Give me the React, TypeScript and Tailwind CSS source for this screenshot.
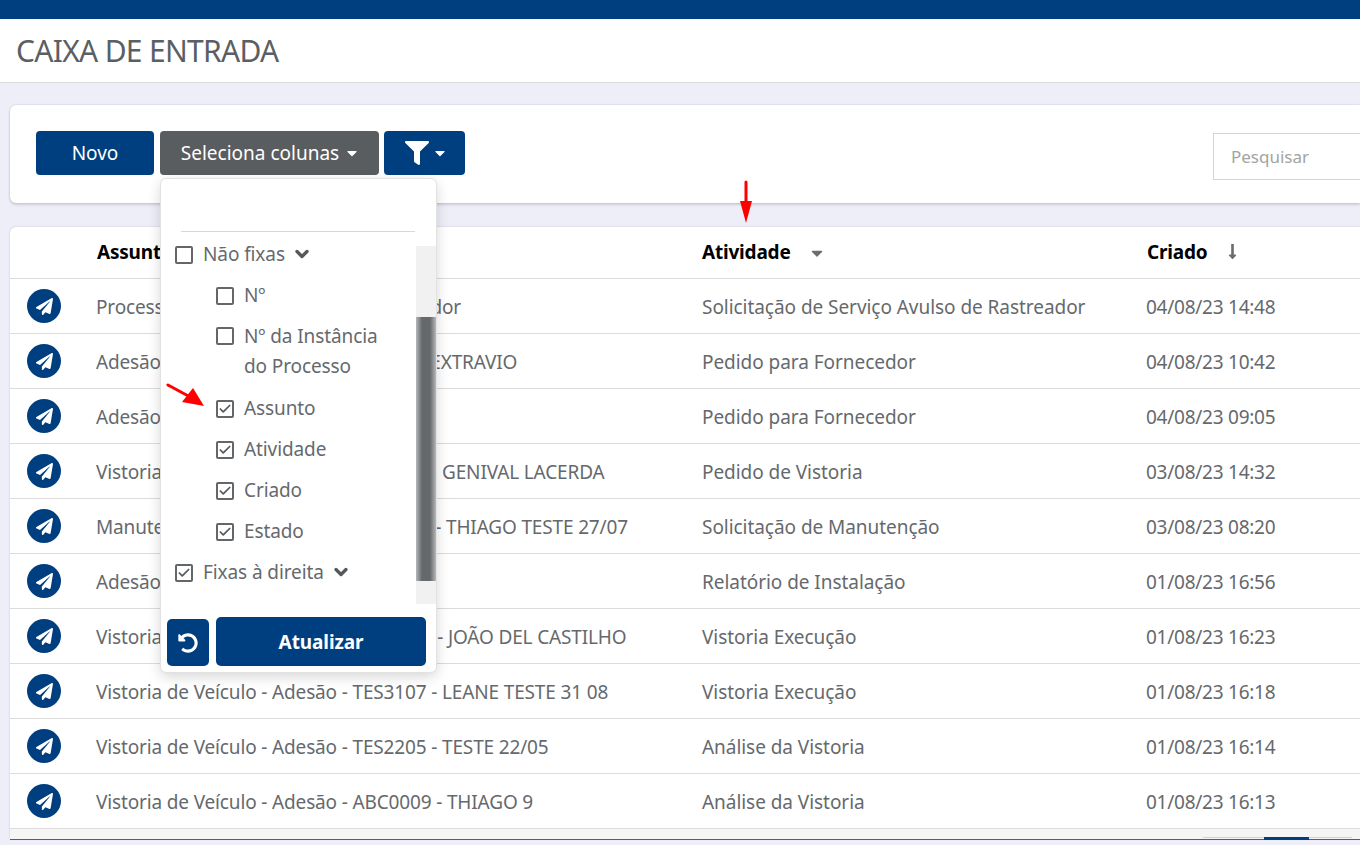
import { Check, ChevronDown } from "lucide-react";
import { FaCaretDown, FaFilter, FaLongArrowAltDown, FaPaperPlane, FaUndoAlt } from "react-icons/fa";

const rows = [
  ["Processo de Serviço Avulso de Rastreador", "Solicitação de Serviço Avulso de Rastreador", "04/08/23 14:48"],
  ["Adesão de Veículo - Adesão - TES408 - EXTRAVIO", "Pedido para Fornecedor", "04/08/23 10:42"],
  ["Adesão de Veículo", "Pedido para Fornecedor", "04/08/23 09:05"],
  ["Vistoria de Veículo - Adesão - TES0308 - GENIVAL LACERDA", "Pedido de Vistoria", "03/08/23 14:32"],
  ["Manutenção de Rastreador - TES-2707 - THIAGO TESTE 27/07", "Solicitação de Manutenção", "03/08/23 08:20"],
  ["Adesão de Veículo", "Relatório de Instalação", "01/08/23 16:56"],
  ["Vistoria de Veículo - Adesão - TES-0108 - JOÃO DEL CASTILHO", "Vistoria Execução", "01/08/23 16:23"],
  ["Vistoria de Veículo - Adesão - TES3107 - LEANE TESTE 31 08", "Vistoria Execução", "01/08/23 16:18"],
  ["Vistoria de Veículo - Adesão - TES2205 - TESTE 22/05", "Análise da Vistoria", "01/08/23 16:14"],
  ["Vistoria de Veículo - Adesão - ABC0009 - THIAGO 9", "Análise da Vistoria", "01/08/23 16:13"],
];

function Box({ checked }: { checked?: boolean }) {
  return (
    <span className="flex h-[18px] w-[18px] shrink-0 items-center justify-center rounded-[2px] border-2 border-[#63676a] bg-white">
      {checked && <Check className="h-[14px] w-[14px] text-[#55595c]" strokeWidth={3} />}
    </span>
  );
}

function ColumnOption({ label, checked }: { label: string; checked?: boolean }) {
  return (
    <div className="flex h-[41px] items-center gap-[10px] pl-[55px]">
      <Box checked={checked} />
      <span>{label}</span>
    </div>
  );
}

function ColumnGroup({ label, checked }: { label: string; checked?: boolean }) {
  return (
    <div className="flex h-[41px] items-center gap-[10px] pl-[14px]">
      <Box checked={checked} />
      <span>{label}</span>
      <ChevronDown className="-ml-[3px] -mt-[2px] h-[20px] w-[20px] text-[#55595c]" strokeWidth={4} />
    </div>
  );
}

function ColumnsMenu() {
  return (
    <div className="absolute left-[161px] top-[179px] z-10 h-[493px] w-[275px] rounded-[5px] bg-white text-[19px] tracking-[-0.1px] text-[#65696d] shadow-[0_0_0_1px_#e2e2e2,0_4px_14px_rgba(0,0,0,0.18)]">
      <div className="ml-[20px] mr-[21px] pt-[52px]">
        <div className="border-b border-[#d8d8d8]" />
      </div>
      <div className="flex">
        <div className="flex-1 pt-[2px]">
          <ColumnGroup label="Não fixas" />
          <ColumnOption label="Nº" />
          <div className="flex h-[72px] items-start gap-[10px] pl-[55px] pt-[5px]">
            <span className="mt-[6px]">
              <Box />
            </span>
            <span className="leading-[30px]">
              Nº da Instância
              <br />
              do Processo
            </span>
          </div>
          <ColumnOption label="Assunto" checked />
          <ColumnOption label="Atividade" checked />
          <ColumnOption label="Criado" checked />
          <ColumnOption label="Estado" checked />
          <ColumnGroup label="Fixas à direita" checked />
        </div>
        <div className="mt-[14px] h-[358px] w-[20px] bg-[#f1f1f1] pt-[71px]">
          <div className="h-[264px] bg-[linear-gradient(90deg,#b5b7b8,#65696c_30%,#65696c_70%,#b5b7b8)]" />
        </div>
      </div>
      <div className="mt-[13px] flex items-end gap-[7px] pl-[6px] pr-[10px]">
        <button className="flex h-[47px] w-[42px] items-center justify-center rounded-[5px] bg-[#003f7f] text-white">
          <FaUndoAlt className="h-[20px] w-[20px]" />
        </button>
        <button className="h-[49px] flex-1 rounded-[5px] bg-[#003f7f] pt-[2px] font-bold text-white">Atualizar</button>
      </div>
    </div>
  );
}

export default function App() {
  return (
    <div className="relative h-[845px] w-[1360px] overflow-hidden bg-[#eeeef8] font-['Noto_Sans',sans-serif] text-[19px] text-[#65696d]">
      <div className="h-[19px] bg-[#003f7f]" />
      <div className="flex h-[64px] items-center border-b border-[#dcdcdc] bg-white pl-[16px] text-[30px] tracking-[-0.7px] text-[#5a5f64]">
        CAIXA DE ENTRADA
      </div>

      <div className="ml-[10px] mt-[22px] flex h-[98px] items-start rounded-l-[6px] bg-white pl-[26px] pt-[26px] shadow-[0_0_2px_rgba(0,0,0,0.2),0_2px_3px_rgba(0,0,0,0.12)]">
        <button className="h-[44px] w-[118px] shrink-0 rounded-[4px] bg-[#003f7f] text-white">Novo</button>
        <button className="ml-[6px] flex h-[44px] w-[219px] shrink-0 items-center justify-center gap-[8px] rounded-[4px] bg-[#5a5d60] pr-[1px] text-white">
          Seleciona colunas
          <FaCaretDown className="h-[16px] w-[10px]" />
        </button>
        <button className="ml-[5px] flex h-[44px] w-[81px] shrink-0 items-center justify-center gap-[6px] rounded-[4px] bg-[#003f7f] text-white">
          <FaFilter className="h-[24px] w-[24px]" />
          <FaCaretDown className="h-[16px] w-[10px]" />
        </button>
        <div className="ml-[748px] mt-[2px] flex h-[47px] w-[160px] shrink-0 items-center border border-[#d4d4d4] pl-[17px] text-[17px] text-[#a3a3a3]">
          Pesquisar
        </div>
      </div>

      <div className="ml-[10px] mt-[24px] rounded-tl-[6px] bg-white shadow-[0_0_2px_rgba(0,0,0,0.2)]">
        <div className="flex h-[52px] items-center border-b border-[#dcdcdc] font-bold tracking-[-0.2px] text-black">
          <div className="w-[87px]" />
          <div className="w-[605px]">Assunto</div>
          <div className="flex w-[445px] items-center">
            Atividade
            <FaCaretDown className="ml-[20px] h-[18px] w-[12px] text-[#6b6e70]" />
          </div>
          <div className="flex items-center">
            Criado
            <FaLongArrowAltDown className="ml-[19px] -mt-[2px] h-[17px] w-[13px] text-[#6b6e70]" />
          </div>
        </div>
        {rows.map((row) => (
          <div key={row[0]} className="flex h-[55px] items-center border-b border-[#dcdcdc]">
            <div className="w-[86px] pl-[17px]">
              <span className="flex h-[34px] w-[34px] items-center justify-center rounded-full bg-[#003f7f] text-white">
                <FaPaperPlane className="h-[17px] w-[17px]" />
              </span>
            </div>
            <div className="w-[606px] whitespace-nowrap pt-[2px] tracking-[-0.15px]">{row[0]}</div>
            <div className="w-[444px] whitespace-nowrap pt-[2px] tracking-[-0.05px]">{row[1]}</div>
            <div className="whitespace-nowrap pt-[2px] tracking-[-0.25px]">{row[2]}</div>
          </div>
        ))}
        <div className="h-[10px] bg-[#f5f5f5]" />
      </div>
      <div className="relative ml-[10px] border-t border-[#5a5d60]">
        <div className="absolute left-[1193px] top-[-3px] h-px w-[149px] bg-[#d4d4d4]" />
        <div className="absolute left-[1254px] top-[-3px] h-[3px] w-[45px] bg-[#003f7f]" />
      </div>

      <ColumnsMenu />

      <svg className="absolute left-[734px] top-[180px] z-20" width="24" height="44" viewBox="0 0 24 44">
        <path d="M12 2v28" stroke="#f00" strokeWidth="3" strokeLinecap="round" />
        <path d="M6 21 L18 21 L12 43 Z" fill="#f00" />
      </svg>
      <svg className="absolute left-[164px] top-[381px] z-20" width="44" height="30" viewBox="0 0 44 30">
        <path d="M4 4 L28 17" stroke="#f00" strokeWidth="3" strokeLinecap="round" />
        <path d="M29 7 L40 25 L18 21 Z" fill="#f00" />
      </svg>
    </div>
  );
}
